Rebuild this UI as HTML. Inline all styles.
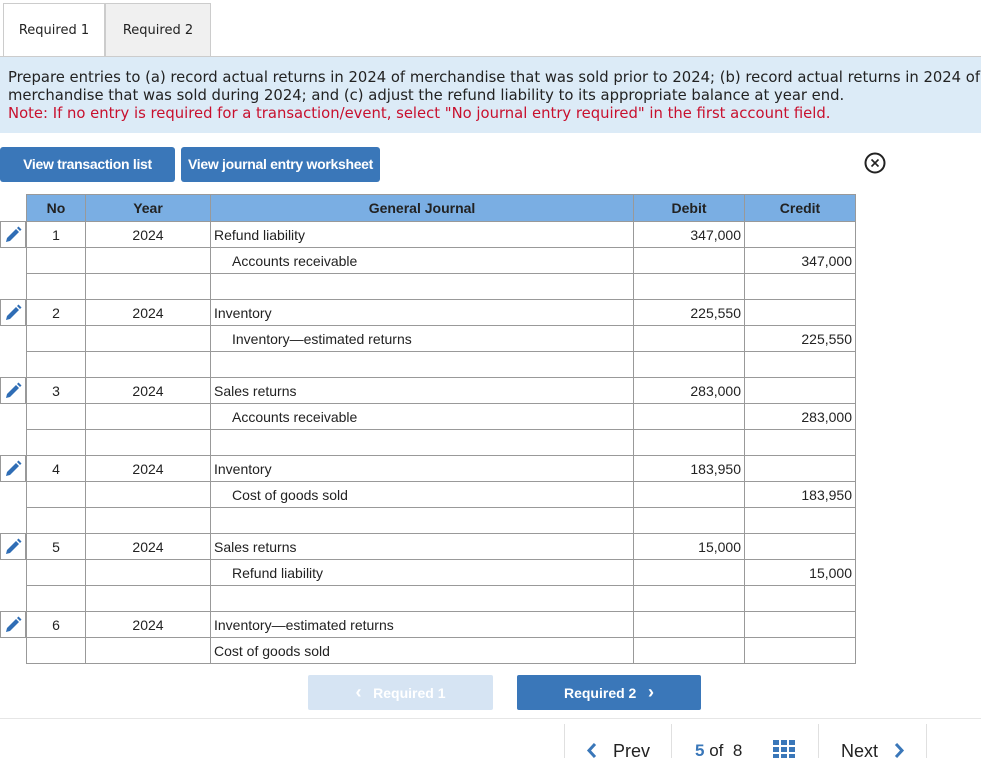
<!DOCTYPE html>
<html><head><meta charset="utf-8"><style>
body{margin:0;width:981px;height:758px;overflow:hidden;background:#fff;font-family:"Liberation Sans",Arial,sans-serif;position:relative}
.a{position:absolute}
.tab{position:absolute;top:3px;height:53px;border:1px solid #ccc;border-bottom:none;font-family:"DejaVu Sans",sans-serif;font-size:13px;line-height:53px;text-align:center;color:#222}
.info{position:absolute;left:0;top:57px;width:981px;height:76px;background:#dcebf7;font-family:"DejaVu Sans",sans-serif;font-size:14.8px;line-height:18px;color:#222;white-space:nowrap;overflow:hidden}
.btn{position:absolute;top:147px;height:35px;background:#3a77b9;color:#fff;font-weight:bold;font-size:14px;line-height:35px;text-align:center;border-radius:3px;letter-spacing:-0.3px}
table{position:absolute;left:26px;top:194px;border-collapse:collapse;font-size:14px;color:#222}
td,th{border:1px solid #999;height:26px;padding:0 3px;box-sizing:border-box}
th{background:#7aaee3;font-weight:bold;height:27px}
.c{text-align:center}.r{text-align:right}.in{padding-left:21px}
.pen{position:absolute;left:0;width:26px;height:27px;border:1px solid #999;box-sizing:border-box}
</style></head><body>
<div class="tab" style="left:3px;width:100px;background:#fff">Required 1</div>
<div class="tab" style="left:105px;width:104px;background:#f0f0f0">Required 2</div>
<div class="a" style="left:0;top:56px;width:981px;height:1px;background:#ccc"></div>
<div class="info"><div style="padding:12px 0 0 8px">Prepare entries to (a) record actual returns in 2024 of merchandise that was sold prior to 2024; (b) record actual returns in 2024 of<br>merchandise that was sold during 2024; and (c) adjust the refund liability to its appropriate balance at year end.<br><span style="color:#c8102e">Note: If no entry is required for a transaction/event, select "No journal entry required" in the first account field.</span></div></div>
<div class="btn" style="left:0;width:175px">View transaction list</div>
<div class="btn" style="left:181px;width:199px">View journal entry worksheet</div>
<svg class="a" style="left:864px;top:152px" width="22" height="22"><circle cx="11" cy="11" r="9.5" fill="none" stroke="#222" stroke-width="2"/><path d="M7.5 7.5L14.5 14.5M14.5 7.5L7.5 14.5" stroke="#222" stroke-width="1.6"/></svg>
<table>
<tr><th style="width:59px">No</th><th style="width:125px">Year</th><th style="width:423px">General Journal</th><th style="width:111px">Debit</th><th style="width:111px">Credit</th></tr>
<tr><td class="c">1</td><td class="c">2024</td><td>Refund liability</td><td class="r">347,000</td><td></td></tr>
<tr><td></td><td></td><td class="in">Accounts receivable</td><td></td><td class="r">347,000</td></tr>
<tr><td></td><td></td><td></td><td></td><td></td></tr>
<tr><td class="c">2</td><td class="c">2024</td><td>Inventory</td><td class="r">225,550</td><td></td></tr>
<tr><td></td><td></td><td class="in">Inventory—estimated returns</td><td></td><td class="r">225,550</td></tr>
<tr><td></td><td></td><td></td><td></td><td></td></tr>
<tr><td class="c">3</td><td class="c">2024</td><td>Sales returns</td><td class="r">283,000</td><td></td></tr>
<tr><td></td><td></td><td class="in">Accounts receivable</td><td></td><td class="r">283,000</td></tr>
<tr><td></td><td></td><td></td><td></td><td></td></tr>
<tr><td class="c">4</td><td class="c">2024</td><td>Inventory</td><td class="r">183,950</td><td></td></tr>
<tr><td></td><td></td><td class="in">Cost of goods sold</td><td></td><td class="r">183,950</td></tr>
<tr><td></td><td></td><td></td><td></td><td></td></tr>
<tr><td class="c">5</td><td class="c">2024</td><td>Sales returns</td><td class="r">15,000</td><td></td></tr>
<tr><td></td><td></td><td class="in">Refund liability</td><td></td><td class="r">15,000</td></tr>
<tr><td></td><td></td><td></td><td></td><td></td></tr>
<tr><td class="c">6</td><td class="c">2024</td><td>Inventory—estimated returns</td><td></td><td></td></tr>
<tr><td></td><td></td><td>Cost of goods sold</td><td></td><td></td></tr>
</table>
<div id="pens"></div>
<script>
var ys=[221,299,377,455,533,611],h='';
ys.forEach(function(y){h+='<div class="pen" style="top:'+y+'px"><svg width="24" height="24" style="position:absolute;left:0;top:0"><path d="M5 20L6 16L15 7L18 10L9 19Z" fill="#2f6db5"/><path d="M16 6L17.5 4.5L20.5 7.5L19 9Z" fill="#2f6db5"/></svg></div>';});
document.getElementById('pens').innerHTML=h;
</script>
<div class="a" style="left:308px;top:675px;width:185px;height:35px;background:#d6e4f3;border-radius:2px;color:#fff;font-weight:bold;font-size:14px;line-height:35px;text-align:center"><span style="font-size:18px">‹</span>&nbsp;&nbsp; Required 1</div>
<div class="a" style="left:517px;top:675px;width:184px;height:35px;background:#3a77b9;border-radius:2px;color:#fff;font-weight:bold;font-size:14px;line-height:35px;text-align:center">Required 2 &nbsp;&nbsp;<span style="font-size:18px">›</span></div>
<div class="a" style="left:0;top:718px;width:981px;height:1px;background:#e6e6e6"></div>
<div class="a" style="left:564px;top:724px;width:1px;height:34px;background:#e0e0e0"></div>
<div class="a" style="left:671px;top:724px;width:1px;height:34px;background:#e0e0e0"></div>
<div class="a" style="left:818px;top:724px;width:1px;height:34px;background:#e0e0e0"></div>
<div class="a" style="left:926px;top:724px;width:1px;height:34px;background:#e0e0e0"></div>
<svg class="a" style="left:586px;top:743px" width="12" height="15"><path d="M9 1L3 7.5L9 14" fill="none" stroke="#3a77b9" stroke-width="3"/></svg>
<div class="a" style="left:613px;top:741px;font-size:18px;color:#222">Prev</div>
<div class="a" style="left:695px;top:741px;font-size:17px;color:#222"><b style="color:#3a77b9">5</b> of&nbsp; 8</div>
<svg class="a" style="left:773px;top:740px" width="22" height="18"><g fill="#3a77b9"><rect x="0" y="0" width="6" height="5"/><rect x="8" y="0" width="6" height="5"/><rect x="16" y="0" width="6" height="5"/><rect x="0" y="7" width="6" height="5"/><rect x="8" y="7" width="6" height="5"/><rect x="16" y="7" width="6" height="5"/><rect x="0" y="14" width="6" height="4"/><rect x="8" y="14" width="6" height="4"/><rect x="16" y="14" width="6" height="4"/></g></svg>
<div class="a" style="left:841px;top:741px;font-size:18px;color:#222">Next</div>
<svg class="a" style="left:893px;top:743px" width="12" height="15"><path d="M3 1L9 7.5L3 14" fill="none" stroke="#3a77b9" stroke-width="3"/></svg>
</body></html>
